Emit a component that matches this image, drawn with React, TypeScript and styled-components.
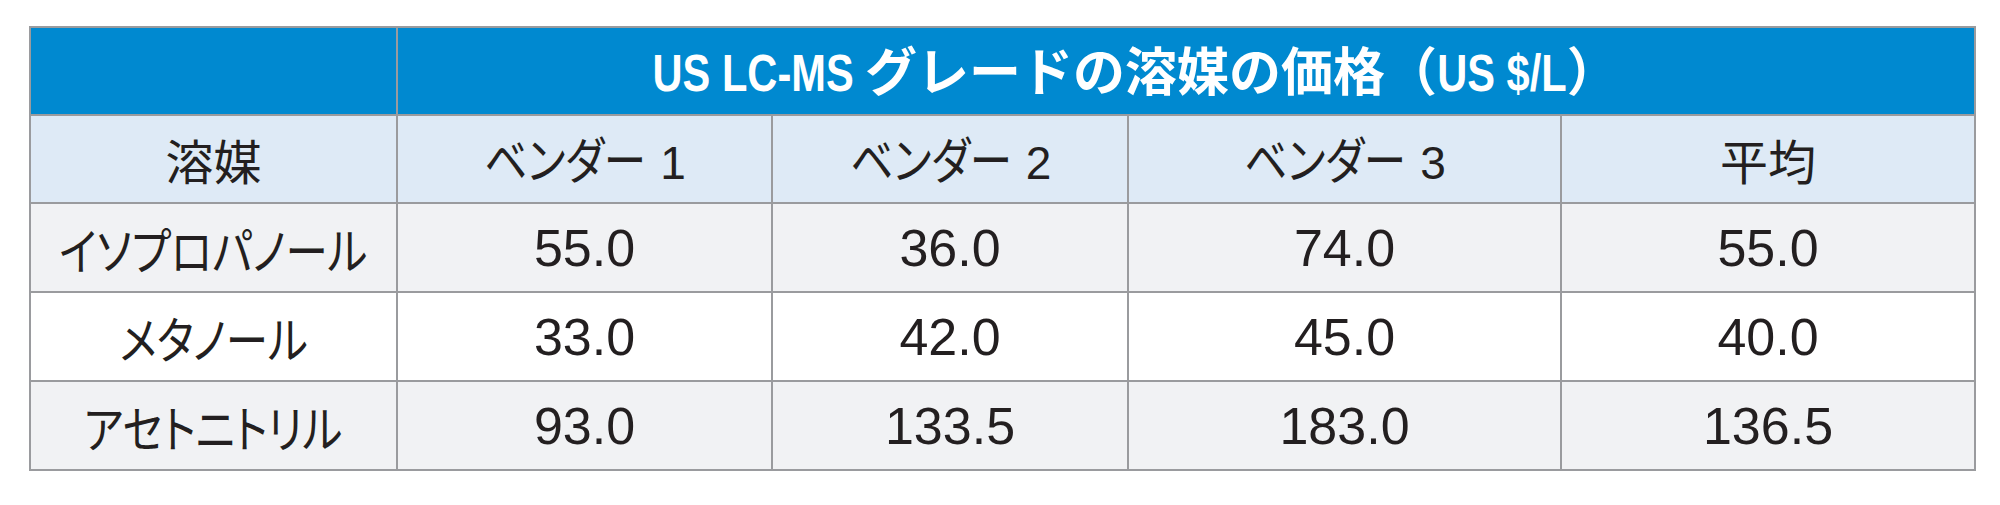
import React from "react";
import styled, { createGlobalStyle } from "styled-components";

const GlobalStyle = createGlobalStyle`
  html, body {
    margin: 0;
    padding: 0;
    background: #ffffff;
  }
  body {
    font-family: "Liberation Sans", "Noto Sans CJK JP", sans-serif;
    color: #231f20;
  }
`;

const Page = styled.div`
  padding: 26px 0 0 29px;
`;

const Table = styled.table`
  border-collapse: collapse;
  table-layout: fixed;
  width: 1945px;
`;

const Col = styled.col<{ $w: number }>`
  width: ${(p) => p.$w}px;
`;

const Cell = styled.td<{ $bg: string }>`
  height: 87px;
  padding: 0;
  text-align: center;
  vertical-align: middle;
  background: ${(p) => p.$bg};
  border: 2px solid #9a9b9e;
  line-height: 1;
  white-space: nowrap;
  overflow: visible;
`;

const SubCell = styled.th`
  height: 86px;
  padding: 0;
  text-align: center;
  vertical-align: middle;
  background: #deeaf6;
  border: 2px solid #9a9b9e;
  line-height: 1;
  white-space: nowrap;
  font-weight: 400;
`;

const TitleCell = styled.th<{ $blank?: boolean }>`
  height: 86px;
  padding: 0 ${(p) => (p.$blank ? 0 : 100)}px 0 0;
  text-align: center;
  vertical-align: middle;
  background: #0089d0;
  color: #ffffff;
  border-top: 2px solid #9a9b9e;
  border-left: 2px solid ${(p) => (p.$blank ? "#9a9b9e" : "#e8f2fa")};
  border-right: 2px solid #9a9b9e;
  border-bottom: 2px solid #9a9b9e;
  line-height: 1;
  white-space: nowrap;
  font-weight: 700;
`;

/* condensed bold latin, as in the original's narrow grotesque */
const TitleLatin = styled.span<{ $trim: number }>`
  display: inline-block;
  font-family: "Liberation Sans", sans-serif;
  font-size: 52px;
  font-weight: 700;
  white-space: pre;
  transform: scaleX(0.8);
  margin: 0 -${(p) => p.$trim}px;
`;

const TitleJp = styled.span`
  font-family: "Noto Sans CJK JP", sans-serif;
  font-size: 52px;
  font-weight: 700;
`;

const Kanji = styled.span`
  font-family: "Noto Sans CJK JP", sans-serif;
  font-size: 48px;
  font-weight: 400;
  font-feature-settings: "palt";
`;

/* the original's katakana are tall and narrow */
const Kana = styled.span<{ $trim?: number }>`
  display: inline-block;
  font-family: "Noto Sans CJK JP", sans-serif;
  font-size: 50px;
  font-weight: 400;
  font-feature-settings: "palt";
  transform: scaleX(0.85);
  margin: 0 -${(p) => p.$trim ?? 0}px;
`;

const Num = styled.span<{ $size: number; $gap?: number }>`
  font-family: "Liberation Sans", sans-serif;
  font-size: ${(p) => p.$size}px;
  margin-left: ${(p) => p.$gap ?? 0}px;
`;

const widths = [367, 375, 356, 433, 414];

const rows: { name: string; values: string[]; bg: string }[] = [
  { name: "イソプロパノール", values: ["55.0", "36.0", "74.0", "55.0"], bg: "#f1f2f4" },
  { name: "メタノール", values: ["33.0", "42.0", "45.0", "40.0"], bg: "#ffffff" },
  { name: "アセトニトリル", values: ["93.0", "133.5", "183.0", "136.5"], bg: "#f1f2f4" },
];

export default function App() {
  return (
    <>
      <GlobalStyle />
      <Page>
        <Table>
          <colgroup>
            {widths.map((w, i) => (
              <Col key={i} $w={w} />
            ))}
          </colgroup>
          <thead>
            <tr>
              <TitleCell $blank />
              <TitleCell colSpan={4}>
                <TitleLatin $trim={27}>US LC-MS </TitleLatin>
                <TitleJp>グレードの溶媒の価格（</TitleJp>
                <TitleLatin $trim={16}>US $/L</TitleLatin>
                <TitleJp>）</TitleJp>
              </TitleCell>
            </tr>
            <tr>
              <SubCell>
                <Kanji>溶媒</Kanji>
              </SubCell>
              {["1", "2", "3"].map((n) => (
                <SubCell key={n}>
                  <Kana $trim={13}>ベンダー</Kana>
                  <Num $size={46} $gap={13}>
                    {n}
                  </Num>
                </SubCell>
              ))}
              <SubCell>
                <Kanji>平均</Kanji>
              </SubCell>
            </tr>
          </thead>
          <tbody>
            {rows.map((r) => (
              <tr key={r.name}>
                <Cell $bg={r.bg}>
                  <Kana>{r.name}</Kana>
                </Cell>
                {r.values.map((v, i) => (
                  <Cell key={i} $bg={r.bg}>
                    <Num $size={52}>{v}</Num>
                  </Cell>
                ))}
              </tr>
            ))}
          </tbody>
        </Table>
      </Page>
    </>
  );
}
